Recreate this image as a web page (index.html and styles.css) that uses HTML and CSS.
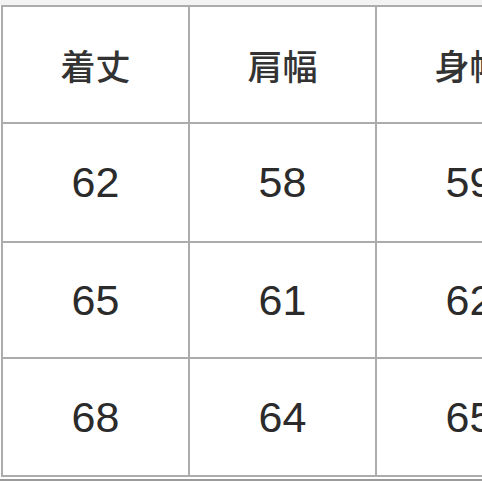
FILE: index.html
```html
<!DOCTYPE html>
<html lang="ja">
<head>
<meta charset="utf-8">
<link rel="stylesheet" href="styles.css">
</head>
<body>
<div class="frame">
  <div class="grid">
    <div class="cell head">着丈</div>
    <div class="cell head">肩幅</div>
    <div class="cell head">身幅</div>
    <div class="cell num">62</div>
    <div class="cell num">58</div>
    <div class="cell num">59</div>
    <div class="cell num">65</div>
    <div class="cell num">61</div>
    <div class="cell num">62</div>
    <div class="cell num">68</div>
    <div class="cell num">64</div>
    <div class="cell num">65</div>
  </div>
</div>
</body>
</html>
```
FILE: styles.css
```css
html, body {
  margin: 0;
  padding: 0;
  background: #ffffff;
  width: 482px;
  height: 482px;
  overflow: hidden;
}
.frame {
  width: 482px;
  overflow: hidden;
  border-top: 5px solid #f3f3f3;
  padding: 0 0 2px 1px;
  border-bottom: 2px solid #9a9a9a;
  box-sizing: border-box;
  height: 481px;
}
.grid {
  display: grid;
  grid-template-columns: 187px 187px 187px;
  grid-template-rows: 117px 119px 116px 118px;
  width: 563px;
  border-top: 2px solid #acacac;
  border-left: 2px solid #acacac;
}
.cell {
  box-sizing: border-box;
  border-right: 2px solid #acacac;
  border-bottom: 2px solid #acacac;
  display: flex;
  align-items: center;
  justify-content: center;
  color: #2b2b2b;
}
.head {
  font-family: "Noto Sans CJK JP", "Noto Sans CJK SC", sans-serif;
  font-size: 35px;
  font-weight: 500;
  color: #333333;
}
.num {
  font-family: "Liberation Sans", Arial, sans-serif;
  font-size: 43px;
}
```
